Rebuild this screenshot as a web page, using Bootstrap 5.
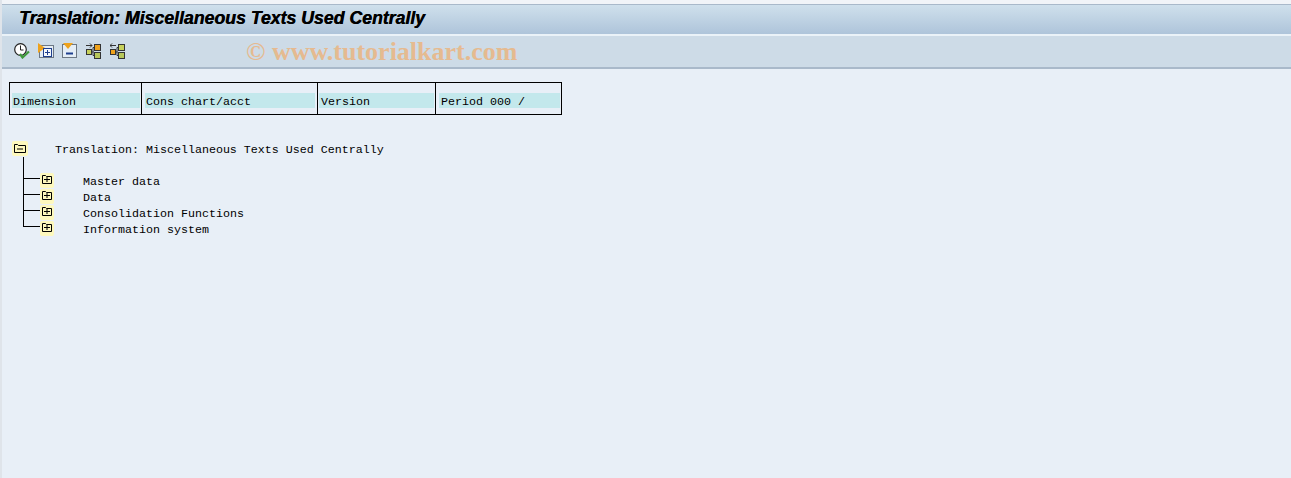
<!DOCTYPE html>
<html lang="en">
<head>
    <meta charset="UTF-8">
    <title>Translation: Miscellaneous Texts Used Centrally</title>
    <link href="https://cdn.jsdelivr.net/npm/bootstrap@5.3.3/dist/css/bootstrap.min.css" rel="stylesheet">
    <style>
        html, body { height: 100%; }
        body { background-color: #e8eff7; overflow: hidden; }
        .sap-screen { height: 478px; border-left: 2px solid #dfe4ea; }
        .sap-topline { height: 4px; background-color: #f1f4f8; border-bottom: 1px solid #a9b9ca; box-sizing: content-box; }
        .sap-title { height: 26px; padding: 0 0 3px 17px; background: linear-gradient(#cfe0ec, #aec4da); border-bottom: 2px solid #eaf2f8; box-sizing: content-box; }
        .sap-title span { font: italic bold 17.7px "Liberation Sans", Arial, sans-serif; color: #000; text-shadow: 0.4px 0 0 #000; }
        .sap-toolbar { height: 30px; padding: 0 0 1px 12px; background-color: #cddbe7; border-bottom: 2px solid #a9b9ca; box-sizing: content-box; }
        .tool-icon { width: 16px; height: 16px; margin-right: 8px; flex: none; display: block; }
        .sap-mark { font: bold 26px "Liberation Serif", serif; color: #e5ba90; margin-left: 112px; padding-top: 2px; white-space: nowrap; }
        .mono-text { font: 11.67px/16px "Liberation Mono", "Courier New", monospace; color: #000; }
        .header-box { margin: 13px 0 0 7px; width: 553px; height: 33px; border: 1px solid #000; }
        .header-cell { height: 100%; border-right: 1px solid #000; padding-top: 10px; flex: none; }
        .header-cell:last-child { border-right: 0; }
        .header-fill { height: 15px; background-color: #c3e8ec; padding-top: 2px; line-height: 15px; white-space: pre; }
        .cell-dim { width: 132px; padding-left: 2px; padding-right: 1px; }
        .cell-dim .header-fill { padding-left: 1px; }
        .cell-chart { width: 176px; padding-left: 3px; padding-right: 2px; }
        .cell-chart .header-fill { padding-left: 1px; }
        .cell-ver { width: 118px; padding-left: 1px; padding-right: 1px; }
        .cell-ver .header-fill { padding-left: 2px; }
        .cell-per { width: 125px; padding-left: 3px; padding-right: 1px; }
        .cell-per .header-fill { padding-left: 2px; }
        .tree-root { margin: 26px 0 0 10px; height: 16px; }
        .tree-root svg { width: 16px; height: 15px; flex: none; display: block; align-self: flex-start; }
        .tree-root span { margin-left: 27px; padding-top: 2px; white-space: pre; }
        .tree-stem { margin-left: 21px; height: 16px; width: 1px; background-color: #000; }
        .tree-list { margin-left: 21px; }
        .tree-row { height: 16px; }
        .tree-row svg { width: 14px; height: 15px; flex: none; display: block; margin-right: 29px; align-self: flex-start; }
        .tree-row span.tree-text { padding-top: 2px; white-space: pre; }
        .tree-link { width: 17px; height: 100%; flex: none; border-left: 1px solid #000; background: linear-gradient(#000, #000) no-repeat 0 5px / 100% 1px; }
        .tree-row:last-child .tree-link { height: 6px; align-self: flex-start; }
    </style>
</head>
<body>
<div class="sap-screen d-flex flex-column">
    <div class="sap-topline"></div>
    <div class="sap-title d-flex align-items-center"><span>Translation: Miscellaneous Texts Used Centrally</span></div>
    <div class="sap-toolbar d-flex align-items-center">
        <!-- execute -->
        <svg class="tool-icon" viewBox="0 0 16 16">
            <circle cx="6.5" cy="6.5" r="5.8" fill="#fff" stroke="#222" stroke-width="1.2"/>
            <path d="M6.5 2.5v4.5h3" fill="none" stroke="#222"/>
            <path d="M6 11l2.5 3.5L15 8.5" fill="none" stroke="#3f9a3c" stroke-width="2.2"/>
        </svg>
        <!-- expand -->
        <svg class="tool-icon" viewBox="0 0 16 16">
            <rect x="1.5" y="2.5" width="14" height="12" fill="#e4edf6" stroke="#6d7884"/>
            <path d="M0 0l7 5-7 5z" fill="#eea21c"/>
            <rect x="5.5" y="5.5" width="8" height="8" fill="#f4f8fc" stroke="#1f3f8f"/>
            <path d="M7 9.5h5M9.5 7v5" stroke="#1f3f8f"/>
        </svg>
        <!-- collapse -->
        <svg class="tool-icon" viewBox="0 0 16 16">
            <rect x="0.5" y="1.5" width="14" height="13" fill="#e4edf6" stroke="#6d7884"/>
            <path d="M1 0h10L6 6z" fill="#eea21c"/>
            <path d="M4 10.5h7" stroke="#1f3f8f" stroke-width="2"/>
        </svg>
        <!-- hierarchy right -->
        <svg class="tool-icon" viewBox="0 0 16 16">
            <path d="M0 2.5h6M4 .5l2 2-2 2" fill="none" stroke="#333"/>
            <rect x="0.5" y="6.5" width="5" height="5" fill="#c6d05a" stroke="#333"/>
            <rect x="8.5" y="1.5" width="6" height="6" fill="#eea21c" stroke="#333"/>
            <rect x="8.5" y="9.5" width="6" height="6" fill="#b7c75a" stroke="#333"/>
            <path d="M5.5 9h2M7 4.5v8M7 4.5h1.5M7 12.5h1.5" stroke="#333" fill="none"/>
        </svg>
        <!-- hierarchy left -->
        <svg class="tool-icon" viewBox="0 0 16 16">
            <path d="M6 2.5H0M2 .5l-2 2 2 2" fill="none" stroke="#333"/>
            <rect x="0.5" y="6.5" width="5" height="5" fill="#eea21c" stroke="#333"/>
            <rect x="8.5" y="1.5" width="6" height="6" fill="#c6d05a" stroke="#333"/>
            <rect x="8.5" y="9.5" width="6" height="6" fill="#b7c75a" stroke="#333"/>
            <path d="M5.5 9h2M7 4.5v8M7 4.5h1.5M7 12.5h1.5" stroke="#333" fill="none"/>
        </svg>
        <span class="sap-mark">© www.tutorialkart.com</span>
    </div>

    <div class="header-box d-flex mono-text">
        <div class="header-cell cell-dim"><div class="header-fill">Dimension</div></div>
        <div class="header-cell cell-chart"><div class="header-fill">Cons chart/acct</div></div>
        <div class="header-cell cell-ver"><div class="header-fill">Version</div></div>
        <div class="header-cell cell-per"><div class="header-fill">Period 000 /</div></div>
    </div>

    <div class="tree-root d-flex align-items-center mono-text">
        <svg viewBox="0 0 16 15">
            <rect width="16" height="15" rx="2" fill="#fdf8bd"/>
            <path d="M2.5 11.5v-8h3l1 1h7v7z" fill="none" stroke="#000"/>
            <path d="M5 8h6" stroke="#000"/>
        </svg>
        <span>Translation: Miscellaneous Texts Used Centrally</span>
    </div>
    <div class="tree-stem"></div>
    <div class="tree-list mono-text">
        <div class="tree-row d-flex align-items-center"><span class="tree-link"></span>
            <svg viewBox="0 0 14 15"><rect width="14" height="15" rx="2" fill="#fdf8bd"/><path d="M2.5 10.5v-8h3l1 1h5v7z" fill="none" stroke="#000"/><path d="M4 6.5h6M7 4v5" stroke="#000"/></svg>
            <span class="tree-text">Master data</span></div>
        <div class="tree-row d-flex align-items-center"><span class="tree-link"></span>
            <svg viewBox="0 0 14 15"><rect width="14" height="15" rx="2" fill="#fdf8bd"/><path d="M2.5 10.5v-8h3l1 1h5v7z" fill="none" stroke="#000"/><path d="M4 6.5h6M7 4v5" stroke="#000"/></svg>
            <span class="tree-text">Data</span></div>
        <div class="tree-row d-flex align-items-center"><span class="tree-link"></span>
            <svg viewBox="0 0 14 15"><rect width="14" height="15" rx="2" fill="#fdf8bd"/><path d="M2.5 10.5v-8h3l1 1h5v7z" fill="none" stroke="#000"/><path d="M4 6.5h6M7 4v5" stroke="#000"/></svg>
            <span class="tree-text">Consolidation Functions</span></div>
        <div class="tree-row d-flex align-items-center"><span class="tree-link"></span>
            <svg viewBox="0 0 14 15"><rect width="14" height="15" rx="2" fill="#fdf8bd"/><path d="M2.5 10.5v-8h3l1 1h5v7z" fill="none" stroke="#000"/><path d="M4 6.5h6M7 4v5" stroke="#000"/></svg>
            <span class="tree-text">Information system</span></div>
    </div>
</div>
<script src="https://cdn.jsdelivr.net/npm/bootstrap@5.3.3/dist/js/bootstrap.bundle.min.js"></script>
</body>
</html>
